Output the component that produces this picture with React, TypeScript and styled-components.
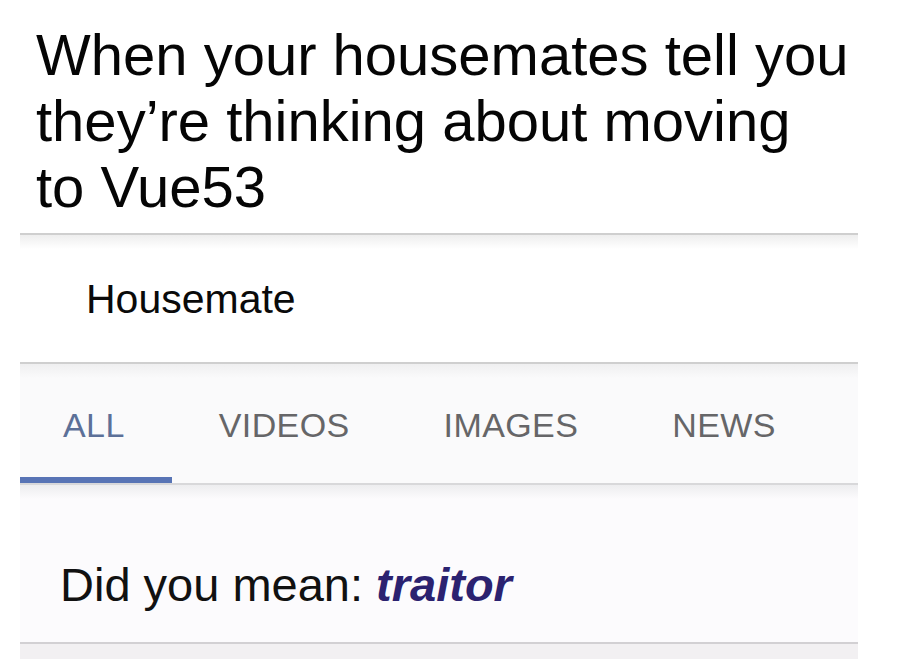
import React from "react";
import styled, { createGlobalStyle } from "styled-components";

const Global = createGlobalStyle`
  html, body {
    margin: 0;
    padding: 0;
    background: #ffffff;
  }
  body {
    font-family: "Liberation Sans", Arial, sans-serif;
    overflow: hidden;
  }
`;

const Page = styled.div`
  width: 906px;
  height: 659px;
  overflow: hidden;
  background: #ffffff;
  display: flex;
  flex-direction: column;
`;

const Caption = styled.h1`
  margin: 22px 0 13px 0;
  padding: 0 0 0 36px;
  font-family: "Liberation Sans", Arial, sans-serif;
  font-weight: 400;
  font-size: 58px;
  line-height: 66px;
  color: #050505;
`;

const Card = styled.div`
  margin: 0 48px 0 20px;
  display: flex;
  flex-direction: column;
  flex: 1;
`;

const Section = styled.div<{ $bg: string; $band: string; $noTop?: boolean }>`
  border-top: ${(p) => (p.$noTop ? "none" : "2px solid #cfcfcf")};
  background: linear-gradient(
    to bottom,
    ${(p) => p.$band} 0px,
    ${(p) => p.$bg} 14px,
    ${(p) => p.$bg} 100%
  );
`;

const Query = styled.div`
  padding: 40px 0 39px 66px;
  font-size: 41px;
  line-height: 48px;
  color: #0a0a0a;
`;

const TabRow = styled.div`
  display: flex;
  align-items: flex-end;
  border-bottom: 2px solid #d8d8da;
`;

const Tab = styled.div<{ $active?: boolean; $first?: boolean }>`
  padding: 41px 47px 32px ${(p) => (p.$first ? "43px" : "47px")};
  font-size: 34px;
  line-height: 40px;
  letter-spacing: 0.4px;
  color: ${(p) => (p.$active ? "#5c7098" : "#666668")};
  border-bottom: 6px solid ${(p) => (p.$active ? "#5874b5" : "transparent")};
`;

const Suggestion = styled.div`
  padding: 72px 0 29px 40px;
  font-size: 47px;
  line-height: 56px;
  color: #111111;
  border-bottom: 2px solid #d2d0d3;
`;

const Fix = styled.span`
  font-weight: 700;
  font-style: italic;
  color: #2b2270;
`;

const Footer = styled.div`
  flex: 1;
  background: #f2f0f2;
`;

const tabs = ["ALL", "VIDEOS", "IMAGES", "NEWS"];

export default function App() {
  return (
    <Page>
      <Global />
      <Caption>
        When your housemates tell you
        <br />
        they’re thinking about moving
        <br />
        to Vue53
      </Caption>
      <Card>
        <Section $bg="#ffffff" $band="#eeeeee">
          <Query>Housemate</Query>
        </Section>
        <Section $bg="#fafafb" $band="#efeff0">
          <TabRow>
            {tabs.map((t, i) => (
              <Tab key={t} $active={i === 0} $first={i === 0}>
                {t}
              </Tab>
            ))}
          </TabRow>
        </Section>
        <Section $bg="#fcfbfd" $band="#ededef" $noTop>
          <Suggestion>
            Did you mean: <Fix>traitor</Fix>
          </Suggestion>
        </Section>
        <Footer />
      </Card>
    </Page>
  );
}
